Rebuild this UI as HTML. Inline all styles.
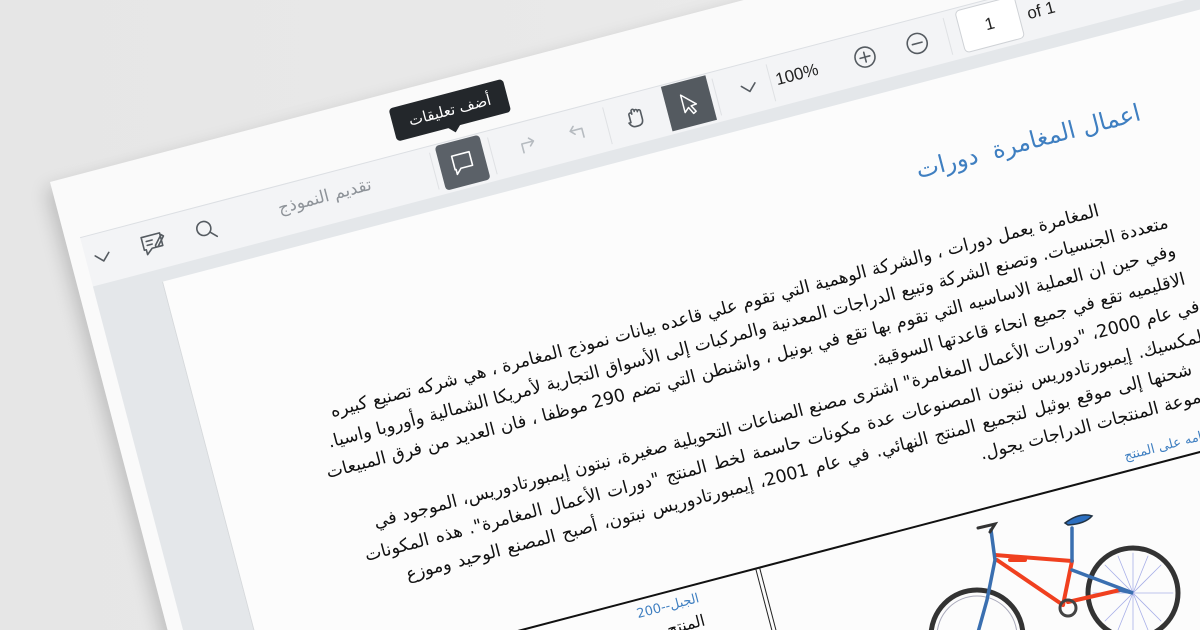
<!DOCTYPE html>
<html><head><meta charset="utf-8">
<style>
html,body{margin:0;padding:0;width:1200px;height:630px;overflow:hidden;background:#e8e8e8;}
body{position:relative;background:linear-gradient(90deg,#e6e6e6,#ececec);}
#w{position:absolute;left:50px;top:182px;width:1500px;height:1000px;background:#fafafa;transform-origin:0 0;transform:rotate(-14.7deg);box-shadow:-6px 6px 18px rgba(0,0,0,0.18);font-family:"Liberation Sans","DejaVu Sans",sans-serif;}
.a{position:absolute;}
#tb{left:15px;top:61px;right:0;height:51px;background:#f3f4f6;border-top:1px solid #dcdfe3;}
#vb{left:15px;top:112px;right:0;bottom:0;background:#e4e7ea;}
#pg{left:83px;top:125px;width:1300px;height:900px;background:#fcfcfc;border-left:1px solid #d6d9dc;}
.sep{position:absolute;top:68px;width:1px;height:38px;background:#dfe1e4;}
.ar{font-family:"DejaVu Sans",sans-serif;direction:rtl;white-space:nowrap;}
.ln{position:absolute;right:427px;width:853px;font-size:17.5px;color:#111;direction:rtl;text-align:justify;text-align-last:justify;white-space:nowrap;font-family:"DejaVu Sans",sans-serif;line-height:22px;}
.rr{text-align:right;text-align-last:right;}
</style></head><body>
<div id="w">
  <div id="tb" class="a"></div>
  <div id="vb" class="a"></div>
  <div id="pg" class="a"></div>

  <svg class="a" style="left:0;top:0" width="1100" height="130">
    <g fill="none" stroke="#555b61" stroke-width="1.6" stroke-linecap="round" stroke-linejoin="round">
      <path d="M25 83 L32 90 L39 83"/>
      <path d="M74 77 h19 v13 h-11 l-6 5 v-5 h-2 z M78 82 h6 M78 86 h5 M86 88 l8 -9 l2 2 l-8 9 h-2 z"/>
      <circle cx="137" cy="84" r="7"/><path d="M142 89 l6 6"/>
      <path d="M466 92 l0 -9 h12 M474 79 l4 4 l-4 4" stroke="#b6bbc0"/>
      <path d="M528 92 l0 -9 h-12 M520 79 l-4 4 l4 4" stroke="#b6bbc0"/>
      <path d="M577 90 v-8 a1.5 1.5 0 0 1 3 0 v-3 a1.5 1.5 0 0 1 3 0 v1 a1.5 1.5 0 0 1 3 0 v1 a1.5 1.5 0 0 1 3 0 v8 q0 6 -6 6 h-2 q-4 0 -6 -5 z"/>
      <path d="M693 83 L700 90 L707 83"/>
      <circle cx="820" cy="86" r="10"/><path d="M815 86 h10 M820 81 v10"/>
      <circle cx="874" cy="86" r="10"/><path d="M869 86 h10"/>
    </g>
  </svg>
  <div class="sep" style="left:374px"></div>
  <div class="sep" style="left:434px"></div>
  <div class="sep" style="left:553px"></div>
  <div class="sep" style="left:666px"></div>
  <div class="sep" style="left:722px"></div>
  <div class="sep" style="left:905px"></div>

  <div class="a ar" style="left:200px;top:74px;width:110px;font-size:17px;color:#8e9399;text-align:right;">تقديم النموذج</div>

  <div class="a" style="left:381px;top:63px;width:46px;height:46px;background:#5b6168;border-radius:4px;"></div>
  <svg class="a" style="left:381px;top:63px" width="46" height="46"><path d="M14 14 h18 v14 h-12 l-5 5 v-5 h-1 z" fill="none" stroke="#fff" stroke-width="1.6" stroke-linejoin="round"/></svg>

  <div class="a" style="left:615px;top:63px;width:46px;height:46px;background:#545a60;"></div>
  <svg class="a" style="left:615px;top:63px" width="46" height="46"><path d="M17 13 L17 31 L21.5 27 L25 34 L28 32.5 L24.5 26 L30 25.5 Z" fill="none" stroke="#fff" stroke-width="1.5" stroke-linejoin="round"/></svg>

  <div class="a" style="left:728px;top:76px;font-size:17px;color:#222;">100%</div>

  <div class="a" style="left:918px;top:64px;width:62px;height:44px;background:#fff;border:1px solid #cfd2d6;border-radius:5px;box-sizing:border-box;text-align:center;line-height:42px;font-size:17px;color:#222;">1</div>
  <div class="a" style="left:988px;top:76px;font-size:17px;color:#222;">of 1</div>

  <div class="a ar" style="left:346px;top:15px;width:118px;height:34px;background:#23272b;border-radius:4px;color:#fff;font-size:15px;line-height:34px;text-align:center;">أضف تعليقات</div>
  <div class="a" style="left:398px;top:48px;width:0;height:0;border-left:7px solid transparent;border-right:7px solid transparent;border-top:7px solid #23272b;"></div>

  <div class="a ar" style="right:428px;top:195px;font-size:24px;color:#3f7fc1;">اعمال المغامرة&nbsp;&nbsp;دورات</div>

  <div class="ln" style="top:283px;right:493px;width:780px;">المغامرة يعمل دورات ، والشركة الوهمية التي تقوم علي قاعده بيانات نموذج المغامرة ، هي شركه تصنيع كبيره</div>
  <div class="ln" style="top:312px;right:429px;">متعددة الجنسيات. وتصنع الشركة وتبيع الدراجات المعدنية والمركبات إلى الأسواق التجارية لأمريكا الشمالية وأوروبا واسيا.</div>
  <div class="ln" style="top:341px;right:429px;">وفي حين ان العملية الاساسيه التي تقوم بها تقع في بونيل ، واشنطن التي تضم 290 موظفا ، فان العديد من فرق المبيعات</div>
  <div class="ln rr" style="top:371px;">الاقليميه تقع في جميع انحاء قاعدتها السوقية.</div>
  <div class="ln" style="top:401px;right:420px;width:845px;">في عام 2000، "دورات الأعمال المغامرة" اشترى مصنع الصناعات التحويلية صغيرة، نبتون إيمبورتادوريس، الموجود في</div>
  <div class="ln" style="top:431px;right:420px;width:870px;">المكسيك. إيمبورتادوريس نبتون المصنوعات عدة مكونات حاسمة لخط المنتج "دورات الأعمال المغامرة". هذه المكونات</div>
  <div class="ln" style="top:460px;right:420px;width:835px;">تم شحنها إلى موقع بوثيل لتجميع المنتج النهائي. في عام 2001، إيمبورتادوريس نبتون، أصبح المصنع الوحيد وموزع</div>
  <div class="ln rr" style="top:489px;right:420px;">مجموعة المنتجات الدراجات يجول.</div>

  <div class="a ar" style="right:410px;top:531px;font-size:13px;color:#3f7fc1;">نظرة عامه على المنتج</div>
  <div class="a" style="left:200px;top:552px;width:900px;height:2px;background:#111;"></div>
  <div class="a" style="left:584px;top:553px;width:3px;height:120px;border-left:1px solid #222;border-right:1px solid #222;"></div>
  <div class="a ar" style="right:978px;top:560px;font-size:13px;color:#3f7fc1;">الجبل--200</div>
  <div class="a ar" style="right:978px;top:580px;font-size:16px;color:#111;">المنتج</div>
</div>

<svg class="a" style="position:absolute;left:0;top:0" width="1200" height="630">
  <g fill="none" stroke-linecap="round">
    <circle cx="977" cy="636" r="46" stroke="#333" stroke-width="5"/>
    <circle cx="977" cy="636" r="40" stroke="#aab" stroke-width="1"/>
    <circle cx="1133" cy="593" r="45" stroke="#333" stroke-width="5"/>
    <g stroke="#a9b0e8" stroke-width="0.8">
      <path d="M1133 553 L1133 633 M1093 593 L1173 593 M1105 565 L1161 621 M1161 565 L1105 621 M1118 556 L1148 630 M1148 556 L1118 630"/>
    </g>
    <path d="M995 555 L1072 561 M997 560 L1063 605 M1072 561 L1063 605 M1068 602 L1120 590 M1010 560 L1025 560" stroke="#f0401f" stroke-width="4"/>
    <path d="M1072 561 L1072 528 M991 530 L995 560 L987 600 L977 636 M1120 590 L1133 593 L1072 570" stroke="#3a6fb0" stroke-width="3.5"/>
    <path d="M1065 523 Q1080 512 1092 516 Q1085 524 1068 525 Z" fill="#2c6fc0" stroke="#234" stroke-width="1.5"/>
    <path d="M978 528 L995 524 L990 532" stroke="#333" stroke-width="3"/>
    <circle cx="1068" cy="608" r="8" stroke="#444" stroke-width="3"/>
  </g>
</svg>
</body></html>
